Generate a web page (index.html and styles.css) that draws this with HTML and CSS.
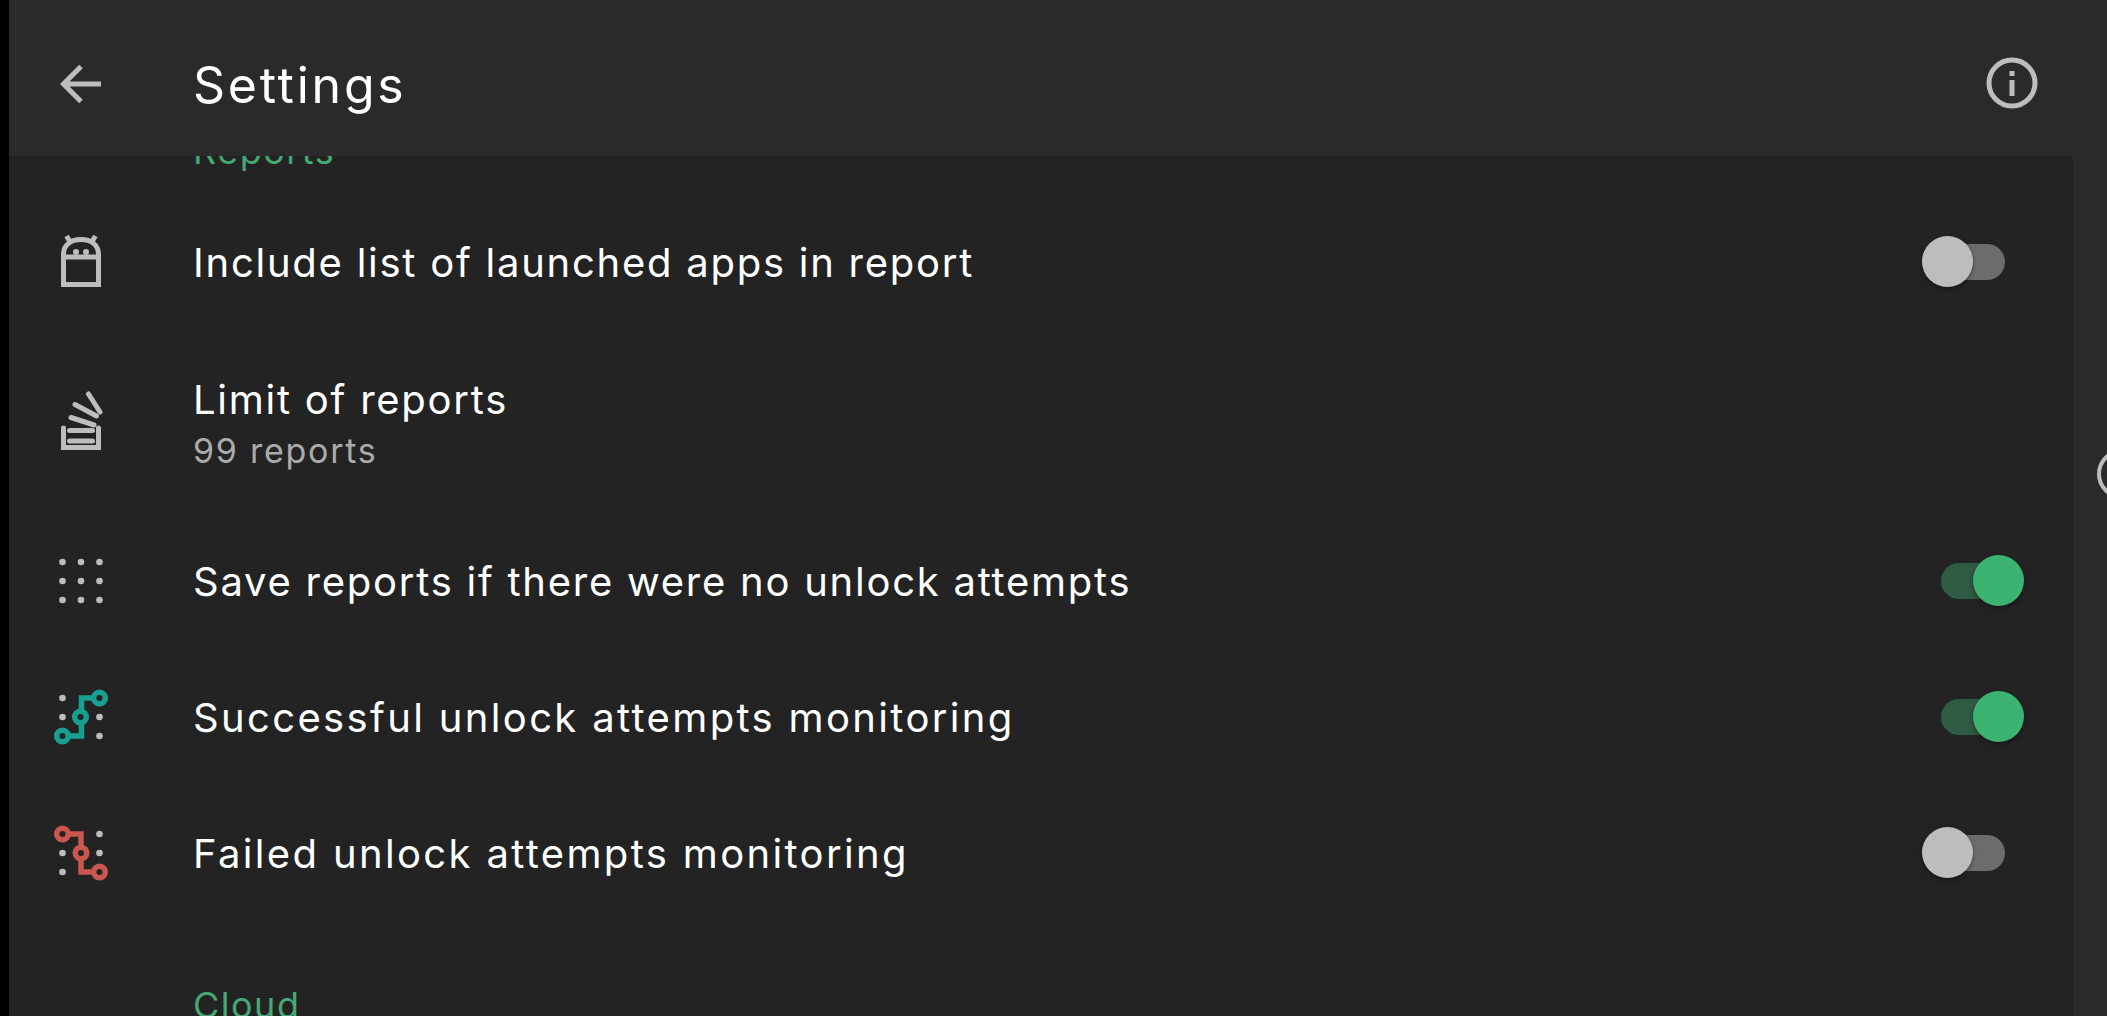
FILE: index.html
```html
<!DOCTYPE html>
<html>
<head>
    <meta charset="UTF-8">
    <meta name="viewport" content="width=device-width, initial-scale=1.0">
    <title>Settings</title>
    <link rel="stylesheet" href="styles.css">
</head>
<body>
    <div class="app">
        <!-- Toolbar -->
        <header class="toolbar">
            <svg class="icon" viewBox="0 0 54 54">
                <path class="line" d="M47 28H10M27 10.500L9.500 28L27 45.500"/>
            </svg>
            <h1 class="toolbar-title">Settings</h1>
            <svg class="icon" viewBox="0 0 54 54">
                <circle class="line" cx="27" cy="27" r="23"/>
                <path class="line" d="M27 24V40M27 15V20"/>
            </svg>
        </header>

        <div class="body">
            <main class="list">
                <div class="section-label section-label-top">Reports</div>

                <div class="row">
                    <svg class="icon" viewBox="0 0 54 54">
                        <path class="line" d="M9.500 49.500V19C9.500 10 17 4.500 27 4.500S44.500 10 44.500 19V49.500ZM9.500 22H44.500M12.500 1L16 6.500M41.500 1L38 6.500"/>
                        <circle class="fill" cx="22" cy="17" r="3"/>
                        <circle class="fill" cx="32" cy="17" r="3"/>
                    </svg>
                    <div class="row-text">Include list of launched apps in report</div>
                    <div class="switch"><span class="thumb"></span></div>
                </div>

                <div class="row row-tall">
                    <svg class="icon" viewBox="0 0 54 54">
                        <path class="line round" d="M9.500 33V52.500H44.500V33M15.500 46H38.500M15.500 35.500H38.500M17 22.500L40 30M21 9.500L42.500 21M34.500 -1L46 17"/>
                    </svg>
                    <div class="row-text">
                        <div>Limit of reports</div>
                        <div class="row-sub">99 reports</div>
                    </div>
                </div>

                <div class="row">
                    <svg class="icon" viewBox="0 0 54 54">
                        <g class="fill">
                            <circle cx="8.500" cy="8" r="3.300"/><circle cx="27" cy="8" r="3.300"/><circle cx="45.500" cy="8" r="3.300"/>
                            <circle cx="8.500" cy="27" r="3.300"/><circle cx="27" cy="27" r="3.300"/><circle cx="45.500" cy="27" r="3.300"/>
                            <circle cx="8.500" cy="46" r="3.300"/><circle cx="27" cy="46" r="3.300"/><circle cx="45.500" cy="46" r="3.300"/>
                        </g>
                    </svg>
                    <div class="row-text">Save reports if there were no unlock attempts</div>
                    <div class="switch on"><span class="thumb"></span></div>
                </div>

                <div class="row">
                    <svg class="icon" viewBox="0 0 54 54">
                        <g class="fill">
                            <circle cx="8.500" cy="8" r="3.300"/><circle cx="8.500" cy="27" r="3.300"/>
                            <circle cx="45.500" cy="27" r="3.300"/><circle cx="45.500" cy="46" r="3.300"/>
                        </g>
                        <g class="teal">
                            <path d="M39 8H27.500V46H14"/>
                            <circle cx="45.500" cy="8" r="5.800"/>
                            <circle cx="26.500" cy="27" r="5.800"/>
                            <circle cx="8.500" cy="46" r="5.800"/>
                        </g>
                    </svg>
                    <div class="row-text row-text-wide">Successful unlock attempts monitoring</div>
                    <div class="switch on"><span class="thumb"></span></div>
                </div>

                <div class="row">
                    <svg class="icon" viewBox="0 0 54 54">
                        <g class="fill">
                            <circle cx="45.500" cy="8" r="3.300"/><circle cx="8.500" cy="27" r="3.300"/>
                            <circle cx="45.500" cy="27" r="3.300"/><circle cx="8.500" cy="46" r="3.300"/>
                        </g>
                        <g class="red">
                            <path d="M14 8H27V46H39"/>
                            <circle cx="8.500" cy="8" r="5.800"/>
                            <circle cx="27" cy="27" r="5.800"/>
                            <circle cx="45.500" cy="46" r="5.800"/>
                        </g>
                    </svg>
                    <div class="row-text row-text-wide">Failed unlock attempts monitoring</div>
                    <div class="switch"><span class="thumb"></span></div>
                </div>

                <div class="section-label section-label-next">Cloud</div>
            </main>

            <!-- Next page peeking in at the edge -->
            <aside class="side-strip">
                <span class="side-ring"></span>
            </aside>
        </div>
    </div>
</body>
</html>
```

FILE: styles.css
```css
html, body {
    height: 100%;
}

body {
    font-family: "Inter", "Open Sans", sans-serif;
    margin: 0;
    padding: 0 0 0 9px;
    background-color: #000;
    color: #fff;
    overflow: hidden;
}

.app {
    height: 100%;
    display: flex;
    flex-direction: column;
    background-color: #232323;
}

/* Toolbar */
.toolbar {
    height: 156px;
    box-sizing: border-box;
    flex-shrink: 0;
    display: flex;
    align-items: center;
    padding: 10px 68px 0 45px;
    background-color: #2a2a2a;
    position: relative;
    z-index: 1;
}

.toolbar-title {
    margin: 0 0 0 85px;
    padding-top: 3px;
    flex-grow: 1;
    font-size: 50px;
    font-weight: 400;
    letter-spacing: 2.75px;
}

.icon {
    width: 54px;
    height: 54px;
    flex-shrink: 0;
    overflow: visible;
}

.line {
    fill: none;
    stroke: #bdbdbd;
    stroke-width: 5;
}

.line.round {
    stroke-linecap: round;
}

.fill {
    fill: #bdbdbd;
}

.teal, .red {
    fill: #232323;
    stroke-width: 5.500;
}

.teal path, .red path {
    fill: none;
}

.teal {
    stroke: #17a08f;
}

.red {
    stroke: #c9574f;
}

.body {
    flex-grow: 1;
    min-height: 0;
    display: flex;
}

.list {
    flex-grow: 1;
    min-width: 0;
    overflow: hidden;
}

.section-label {
    margin-left: 184px;
    font-size: 36px;
    letter-spacing: 1.500px;
    color: #46a874;
}

.section-label-top {
    margin-top: -27px;
    height: 65px;
}

.section-label-next {
    margin-top: 62px;
}

.row {
    height: 136px;
    display: flex;
    align-items: center;
    padding: 0 68px 0 45px;
}

.row-tall {
    height: 183px;
}

.row-tall .row-text {
    padding-top: 2px;
}

.row-text {
    margin-left: 85px;
    flex-grow: 1;
    font-size: 40px;
    letter-spacing: 1.75px;
}

.row-text-wide {
    letter-spacing: 2.35px;
}

.row-sub {
    margin-top: 6px;
    font-size: 34px;
    color: #ababab;
}

/* Toggle switch */
.switch {
    width: 64px;
    height: 36px;
    border-radius: 18px;
    background-color: #6c6c6c;
    position: relative;
    margin-top: -1px;
}

.thumb {
    position: absolute;
    top: -8px;
    left: -19px;
    width: 51px;
    height: 51px;
    border-radius: 50%;
    background-color: #bdbdbd;
    box-shadow: 0 2px 4px rgba(0, 0, 0, 0.4);
}

.switch.on {
    background-color: #2f5a43;
}

.switch.on .thumb {
    left: 32px;
    background-color: #3cb371;
}

.side-strip {
    width: 34px;
    flex-shrink: 0;
    background-color: #2a2a2a;
    position: relative;
    overflow: hidden;
}

.side-ring {
    position: absolute;
    top: 293px;
    left: 24px;
    width: 50px;
    height: 50px;
    border: 4px solid #bdbdbd;
    border-radius: 50%;
    box-sizing: border-box;
}
```
